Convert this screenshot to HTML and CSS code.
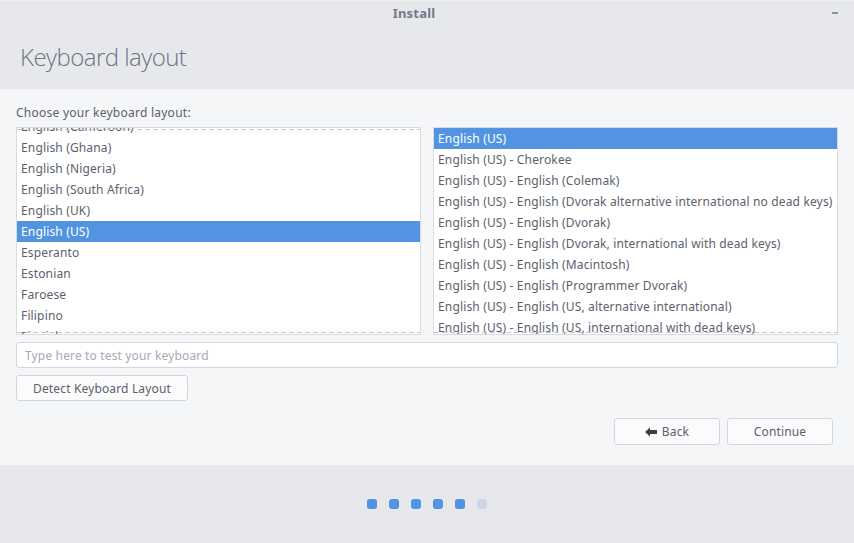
FILE: index.html
```html
<!DOCTYPE html>
<html>
<head>
<meta charset="utf-8">
<link rel="stylesheet" href="styles.css">
</head>
<body>
<div class="window">
  <header class="header">
    <div class="titlebar">
      <span class="title">Install</span>
      <span class="minimize"></span>
    </div>
    <h1 class="heading">Keyboard layout</h1>
  </header>
  <main class="content">
    <div class="label">Choose your keyboard layout:</div>
    <div class="lists">
      <div class="list list-left">
        <div class="rows scrolled">
          <div class="row">English (Cameroon)</div>
          <div class="row">English (Ghana)</div>
          <div class="row">English (Nigeria)</div>
          <div class="row">English (South Africa)</div>
          <div class="row">English (UK)</div>
          <div class="row selected">English (US)</div>
          <div class="row">Esperanto</div>
          <div class="row">Estonian</div>
          <div class="row">Faroese</div>
          <div class="row">Filipino</div>
          <div class="row">Finnish</div>
        </div>
        <div class="undershoot top"></div>
        <div class="undershoot bottom"></div>
      </div>
      <div class="list list-right">
        <div class="rows">
          <div class="row selected">English (US)</div>
          <div class="row">English (US) - Cherokee</div>
          <div class="row">English (US) - English (Colemak)</div>
          <div class="row">English (US) - English (Dvorak alternative international no dead keys)</div>
          <div class="row">English (US) - English (Dvorak)</div>
          <div class="row">English (US) - English (Dvorak, international with dead keys)</div>
          <div class="row">English (US) - English (Macintosh)</div>
          <div class="row">English (US) - English (Programmer Dvorak)</div>
          <div class="row">English (US) - English (US, alternative international)</div>
          <div class="row">English (US) - English (US, international with dead keys)</div>
        </div>
        <div class="undershoot bottom"></div>
      </div>
    </div>
    <input class="test-input" type="text" placeholder="Type here to test your keyboard">
    <div class="detect-row">
      <button class="btn detect">Detect Keyboard Layout</button>
    </div>
    <div class="nav-row">
      <button class="btn nav"><svg class="arrow" width="12" height="10" viewBox="0 0 12 10"><path d="M0 5 L5 0.5 L5 3 L12 3 L12 7 L5 7 L5 9.5 Z" fill="#3d3f45"/></svg>Back</button>
      <button class="btn nav">Continue</button>
    </div>
  </main>
  <footer class="footer">
    <div class="dots">
      <span class="dot on"></span>
      <span class="dot on"></span>
      <span class="dot on"></span>
      <span class="dot on"></span>
      <span class="dot on"></span>
      <span class="dot"></span>
    </div>
  </footer>
</div>
</body>
</html>
```

FILE: styles.css
```css
* { box-sizing: border-box; }
html, body { margin: 0; padding: 0; }
body {
  width: 854px;
  height: 543px;
  overflow: hidden;
  font-family: "Noto Sans", "Open Sans", sans-serif;
  color: #5c616c;
  font-size: 12px;
  letter-spacing: 0.15px;
  background: #e7e8eb;
}
.window { display: flex; flex-direction: column; height: 543px; }

.header {
  height: 89px;
  background: #e7e8eb;
  border-top: 1px solid #eeeff2;
  display: flex;
  flex-direction: column;
}
.titlebar {
  height: 24px;
  display: flex;
  align-items: center;
  justify-content: center;
  padding-right: 26px;
  position: relative;
}
.title {
  font-weight: bold;
  font-size: 13px;
  color: #737889;
  letter-spacing: 0.2px;
}
.minimize {
  position: absolute;
  right: 16px;
  top: 11px;
  width: 6px;
  height: 2px;
  background: #8d929b;
}
.heading {
  margin: 17px 0 0 20px;
  font-family: "Open Sans", "Noto Sans", sans-serif;
  font-weight: 300;
  font-size: 24px;
  line-height: 30px;
  color: #6e7386;
  letter-spacing: -0.55px;
}

.content {
  height: 376px;
  background: #f5f6f7;
  padding: 0 16px;
  display: flex;
  flex-direction: column;
}
.label {
  margin-top: 15px;
  line-height: 17px;
  height: 23px;
  color: #5c616c;
  letter-spacing: 0.25px;
}
.lists {
  display: flex;
  gap: 12px;
  height: 208px;
}
.list {
  flex: 1;
  background: #ffffff;
  border: 1px solid #d8dbe1;
  overflow: hidden;
  position: relative;
}
.rows { display: flex; flex-direction: column; }
.rows.scrolled { margin-top: -12px; }
.row {
  height: 21px;
  line-height: 21px;
  padding-left: 4px;
  white-space: nowrap;
  color: #5c616c;
}
.row.selected { background: #5294e2; color: #ffffff; }
.undershoot {
  position: absolute;
  left: 0;
  right: 0;
  height: 1px;
  background: repeating-linear-gradient(90deg, #c3c6cc 0 5px, transparent 5px 8px);
}
.undershoot.top { top: 1px; }
.undershoot.bottom { bottom: 1px; }

.test-input {
  margin-top: 7px;
  height: 26px;
  width: 822px;
  border: 1px solid #cfd6e6;
  border-radius: 3px;
  background: #ffffff;
  padding: 0 8px;
  font-family: "Noto Sans", "Open Sans", sans-serif;
  font-size: 12px;
  letter-spacing: 0.15px;
  color: #5c616c;
  outline: none;
}
.test-input::placeholder { color: #a7aab0; }

.detect-row { margin-top: 7px; display: flex; }
.btn {
  height: 26px;
  border: 1px solid #cfd6e6;
  border-radius: 3px;
  background: #fbfbfc;
  font-family: "Noto Sans", "Open Sans", sans-serif;
  font-size: 12px;
  letter-spacing: 0.15px;
  color: #5c616c;
  padding: 0;
  display: flex;
  align-items: center;
  justify-content: center;
}
.detect { width: 172px; }
.nav-row {
  margin-top: 17px;
  display: flex;
  justify-content: flex-end;
  gap: 7px;
  padding-right: 5px;
}
.nav { width: 106px; height: 27px; }
.arrow { margin-right: 5px; }

.footer {
  flex: 1;
  background: #e7e8eb;
  display: flex;
  justify-content: center;
  padding-top: 34px;
}
.dots { display: flex; gap: 12px; height: 10px; }
.dot {
  width: 10px;
  height: 10px;
  border-radius: 3px;
  background: #cfd6e6;
}
.dot.on { background: #5294e2; }
```
